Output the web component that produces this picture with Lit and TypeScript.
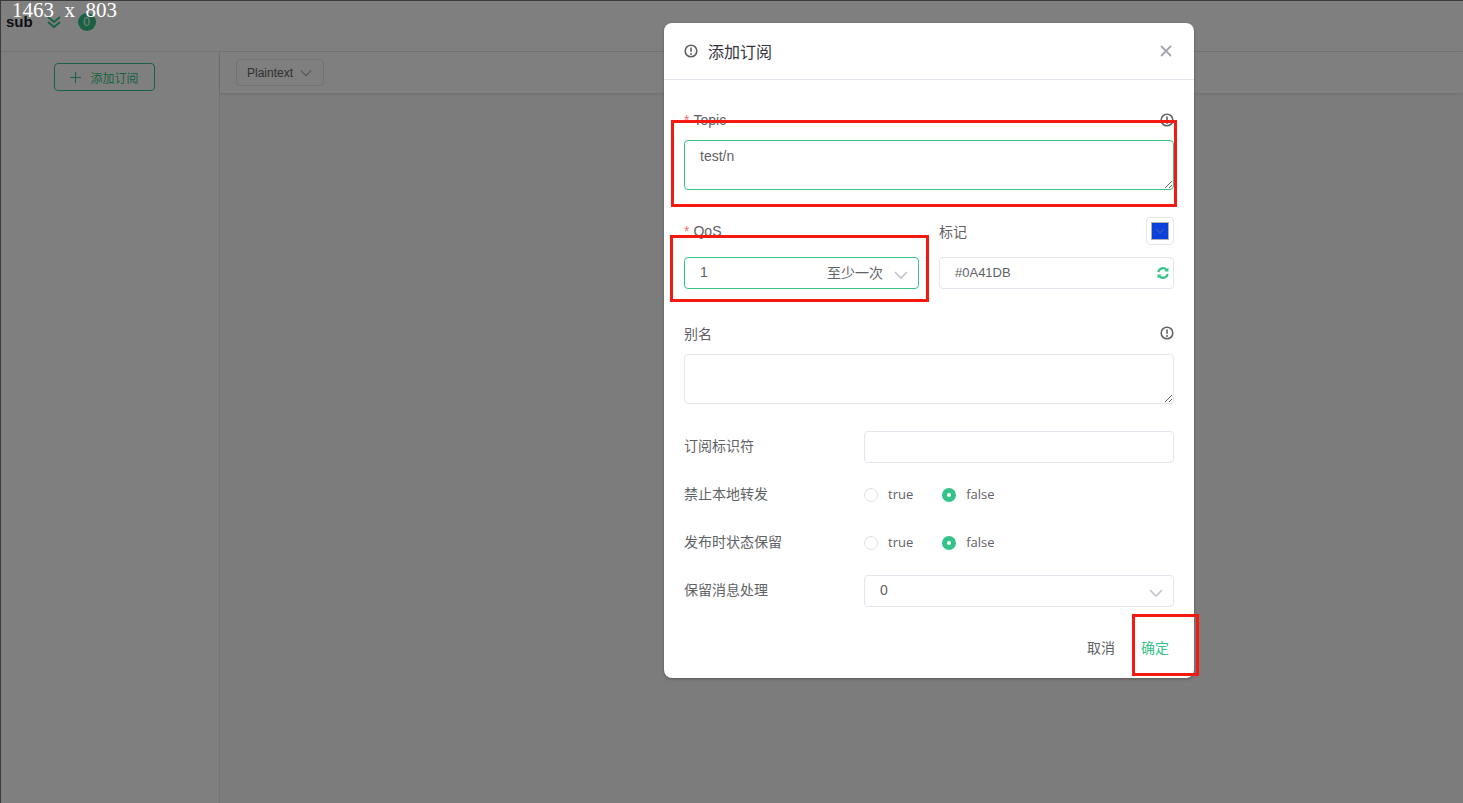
import { LitElement, html, css, svg } from "lit";
import { customElement } from "lit/decorators.js";

const infoIcon = svg`<circle cx="7" cy="7" r="5.8" fill="none" stroke="currentColor" stroke-width="1.6"/><path d="M7 3.6v4.2" stroke="currentColor" stroke-width="1.6" fill="none"/><circle cx="7" cy="10" r="1" fill="currentColor"/>`;

const chevron = svg`<path d="M2 5l6 6 6-6" fill="none" stroke="currentColor" stroke-width="1.6"/>`;

@customElement("app-root")
export class AppRoot extends LitElement {
  static styles = css`
    :host {
      display: block;
      position: relative;
      width: 1463px;
      height: 803px;
      overflow: hidden;
      background: #fff;
      font-family: "Liberation Sans", "Noto Sans CJK SC", sans-serif;
      font-size: 14px;
      color: #333;
    }

    /* page behind the modal */
    .page {
      display: flex;
      flex-direction: column;
      height: 100%;
      box-sizing: border-box;
      border-top: 1px solid #777;
      border-left: 1px solid #777;
    }

    .topbar {
      height: 51px;
      flex: none;
      display: flex;
      align-items: center;
      gap: 10px;
      padding: 0 0 9px 5px;
      box-sizing: border-box;
      border-bottom: 1px solid #e4e6ee;
    }

    .topbar b {
      font-size: 15px;
      color: #1a1a2a;
      margin-right: 3px;
    }

    .topbar svg {
      width: 16px;
      height: 16px;
      color: #34c388;
    }

    .badge {
      width: 18px;
      height: 18px;
      margin-left: 6px;
      border-radius: 50%;
      background: #34c388;
      color: #fff;
      font-size: 12px;
      line-height: 19px;
      text-align: center;
    }

    .content {
      flex: 1;
      display: flex;
    }

    .side {
      width: 219px;
      flex: none;
      box-sizing: border-box;
      border-right: 1px solid #e4e6ee;
      padding: 11px 0 0 53px;
    }

    .add {
      width: 101px;
      height: 28px;
      box-sizing: border-box;
      border: 1px solid #34c388;
      border-radius: 4px;
      color: #34c388;
      font-size: 12px;
      display: flex;
      align-items: center;
      justify-content: center;
      gap: 9px;
    }

    .add svg {
      width: 11px;
      height: 11px;
    }

    .main {
      flex: 1;
      background: #f9f9fb;
    }

    .toolbar {
      height: 41px;
      box-sizing: border-box;
      background: #fff;
      padding: 7px 16px;
      box-shadow: 0 1px 3px rgba(0, 0, 0, 0.12);
    }

    .format {
      width: 88px;
      height: 27px;
      box-sizing: border-box;
      border: 1px solid #e4e6ee;
      border-radius: 4px;
      font-size: 12px;
      color: #606266;
      display: flex;
      align-items: center;
      gap: 6px;
      padding-left: 10px;
    }

    .format svg {
      width: 14px;
      height: 14px;
      color: #b0b3bd;
    }

    .mask {
      position: absolute;
      inset: 0;
      background: rgba(0, 0, 0, 0.5);
    }

    /* modal */
    .dialog {
      position: absolute;
      left: 664px;
      top: 23px;
      width: 530px;
      height: 655px;
      box-sizing: border-box;
      background: #fff;
      border-radius: 8px;
      box-shadow: 0 1px 3px rgba(0, 0, 0, 0.3);
      display: flex;
      flex-direction: column;
      color: #606266;
    }

    .head {
      height: 57px;
      flex: none;
      box-sizing: border-box;
      border-bottom: 1px solid #e4e6ee;
      display: flex;
      align-items: center;
      padding: 0 22px 1px 20px;
      font-size: 16px;
      color: #33333f;
    }

    .head .info {
      margin-right: 10px;
    }

    .head .close {
      margin-left: auto;
      width: 12px;
      height: 12px;
      color: #a3a6b0;
    }

    .info {
      width: 14px;
      height: 14px;
      flex: none;
      color: #606266;
    }

    .body {
      flex: 1;
      padding: 29px 20px 0;
      display: flex;
      flex-direction: column;
    }

    .label {
      height: 22px;
      display: flex;
      align-items: center;
      justify-content: space-between;
      font-size: 14px;
      margin-bottom: 9px;
    }

    .label i {
      color: #f56c6c;
      font-style: normal;
      margin-right: 4px;
    }

    textarea {
      display: block;
      width: 100%;
      height: 50px;
      box-sizing: border-box;
      border: 1px solid #e4e6ee;
      border-radius: 4px;
      padding: 7px 15px;
      font: 14px "Liberation Sans", "Noto Sans CJK SC", sans-serif;
      color: #606266;
      resize: vertical;
      outline: none;
    }

    textarea.focus {
      border-color: #34c388;
    }

    .split {
      display: grid;
      grid-template-columns: 235px 235px;
      gap: 20px;
      margin-top: 30px;
    }

    .split .label {
      margin-bottom: 15px;
    }

    .tag {
      width: 28px;
      height: 28px;
      box-sizing: border-box;
      border: 1px solid #e4e6ee;
      border-radius: 4px;
      padding: 4px;
    }

    .tag span {
      display: flex;
      align-items: center;
      justify-content: center;
      height: 100%;
      box-sizing: border-box;
      background: #0a41db;
      border: 1px solid #b0b0b0;
    }

    .tag svg {
      width: 10px;
      height: 10px;
      color: #5a6c9c;
    }

    .field {
      height: 32px;
      box-sizing: border-box;
      border: 1px solid #e4e6ee;
      border-radius: 4px;
      display: flex;
      align-items: center;
      padding: 0 9px 2px 15px;
      font-size: 14px;
    }

    .field.focus {
      border-color: #34c388;
    }

    .field.hex {
      font-size: 13px;
    }

    .field .chev {
      width: 16px;
      height: 16px;
      color: #c0c4cc;
      margin-left: 10px;
      margin-top: 5px;
    }

    .field .right {
      margin-left: auto;
    }

    .field .refresh {
      width: 12px;
      height: 12px;
      margin-left: auto;
      margin-right: -5px;
      margin-top: 2px;
    }

    .label.alias {
      margin-top: 33px;
      margin-bottom: 10px;
    }

    .row {
      display: grid;
      grid-template-columns: 180px 310px;
      align-items: center;
      height: 32px;
      font-size: 14px;
      margin-bottom: 16px;
    }

    .row > span {
      margin-bottom: 4px;
    }

    .row.first {
      margin-top: 27px;
    }

    .radios {
      display: flex;
      align-items: center;
      font-family: "Open Sans", "Liberation Sans", sans-serif;
      font-size: 13px;
    }

    .radios span {
      margin-bottom: 2px;
    }

    .radio {
      width: 14px;
      height: 14px;
      box-sizing: border-box;
      border: 1px solid #e0e0e6;
      border-radius: 50%;
      margin-right: 10px;
    }

    .radio.on {
      border: 5px solid #34c388;
    }

    .radios span + .radio {
      margin-left: 29px;
    }

    .foot {
      display: flex;
      justify-content: flex-end;
      gap: 26px;
      font-size: 14px;
      padding: 9px 25px 21px 0;
    }

    .foot .ok {
      color: #34c388;
    }

    /* annotations drawn on the screenshot */
    .mark {
      position: absolute;
      box-sizing: border-box;
      border: 3px solid #f5190f;
    }

    .stamp {
      position: absolute;
      left: 12px;
      top: 0;
      color: #fff;
      font: 21px/20px "Liberation Serif", serif;
      white-space: pre;
    }
  `;

  private renderRadios() {
    return html`<div class="radios">
      <div class="radio"></div>
      <span>true</span>
      <div class="radio on"></div>
      <span>false</span>
    </div>`;
  }

  render() {
    return html`
      <div class="page">
        <div class="topbar">
          <b>sub</b>
          <svg viewBox="0 0 16 16">
            <path d="M2 3l6 5 6-5M2 8l6 5 6-5" fill="none" stroke="currentColor" stroke-width="2" />
          </svg>
          <div class="badge">0</div>
        </div>
        <div class="content">
          <div class="side">
            <div class="add">
              <svg viewBox="0 0 12 12">
                <path d="M6 0v12M0 6h12" stroke="currentColor" stroke-width="1.2" />
              </svg>
              添加订阅
            </div>
          </div>
          <div class="main">
            <div class="toolbar">
              <div class="format">Plaintext <svg viewBox="0 0 16 16">${chevron}</svg></div>
            </div>
          </div>
        </div>
      </div>
      <div class="mask"></div>

      <div class="dialog">
        <div class="head">
          <svg class="info" viewBox="0 0 14 14">${infoIcon}</svg>
          添加订阅
          <svg class="close" viewBox="0 0 12 12">
            <path d="M1 1l10 10M11 1L1 11" stroke="currentColor" stroke-width="1.8" />
          </svg>
        </div>
        <div class="body">
          <div class="label">
            <span><i>*</i>Topic</span>
            <svg class="info" viewBox="0 0 14 14">${infoIcon}</svg>
          </div>
          <textarea class="focus" .value=${"test/n"}></textarea>

          <div class="split">
            <div>
              <div class="label"><span><i>*</i>QoS</span></div>
              <div class="field focus">
                1
                <span class="right">至少一次</span>
                <svg class="chev" viewBox="0 0 16 16">${chevron}</svg>
              </div>
            </div>
            <div>
              <div class="label">
                <span>标记</span>
                <div class="tag">
                  <span><svg viewBox="0 0 16 16">${chevron}</svg></span>
                </div>
              </div>
              <div class="field hex">
                #0A41DB
                <svg class="refresh" viewBox="0 0 12 12">
                  <path d="M1.4 5.2A4.6 4.6 0 0 1 9.6 3M10.6 6.8A4.6 4.6 0 0 1 2.4 9" fill="none" stroke="#34c388" stroke-width="2.2" />
                  <path d="M11.4 0.6v4H7.4zM0.6 11.4v-4h4z" fill="#34c388" />
                </svg>
              </div>
            </div>
          </div>

          <div class="label alias">
            <span>别名</span>
            <svg class="info" viewBox="0 0 14 14">${infoIcon}</svg>
          </div>
          <textarea></textarea>

          <div class="row first"><span>订阅标识符</span><div class="field"></div></div>
          <div class="row"><span>禁止本地转发</span>${this.renderRadios()}</div>
          <div class="row"><span>发布时状态保留</span>${this.renderRadios()}</div>
          <div class="row">
            <span>保留消息处理</span>
            <div class="field">
              0
              <svg class="chev right" viewBox="0 0 16 16">${chevron}</svg>
            </div>
          </div>
        </div>
        <div class="foot"><span>取消</span><span class="ok">确定</span></div>
      </div>

      <div class="mark" style="left:671px;top:120px;width:506px;height:87px"></div>
      <div class="mark" style="left:670px;top:235px;width:259px;height:67px"></div>
      <div class="mark" style="left:1132px;top:614px;width:67px;height:62px"></div>
      <div class="stamp">1463  x  803</div>
    `;
  }
}
